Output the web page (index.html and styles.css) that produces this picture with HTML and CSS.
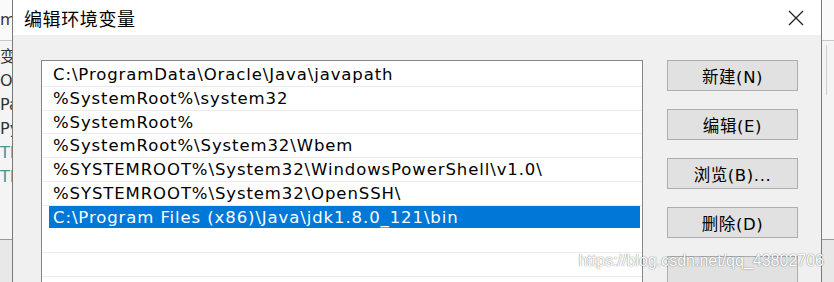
FILE: index.html
```html
<!DOCTYPE html>
<html lang="zh-CN">
<head>
  <meta charset="UTF-8" />
  <title>编辑环境变量</title>
  <link rel="stylesheet" href="styles.css">
</head>
<body>

  <div class="screen">
    <div class="behind left">
      <div class="behind-top"><span>m</span></div>
      <div class="behind-mid">
        <span>变</span>
        <span>O</span>
        <span>Pa</span>
        <span>Py</span>
        <span class="teal">TE</span>
        <span class="teal">TN</span>
      </div>
      <div class="behind-bottom"></div>
    </div>

    <div class="dialog">
      <div class="titlebar">
        <span class="title">编辑环境变量</span>
        <svg class="close" width="16" height="16" viewBox="0 0 16 16">
          <path d="M1 1 L15 15 M15 1 L1 15" stroke="#222" stroke-width="1.3" fill="none" />
        </svg>
      </div>

      <div class="body">
        <ul class="pathlist">
          <li><span>C:\ProgramData\Oracle\Java\javapath</span></li>
          <li><span>%SystemRoot%\system32</span></li>
          <li><span>%SystemRoot%</span></li>
          <li><span>%SystemRoot%\System32\Wbem</span></li>
          <li><span>%SYSTEMROOT%\System32\WindowsPowerShell\v1.0\</span></li>
          <li><span>%SYSTEMROOT%\System32\OpenSSH\</span></li>
          <li class="selected"><span>C:\Program Files (x86)\Java\jdk1.8.0_121\bin</span></li>
          <li><span></span></li>
          <li><span></span></li>
        </ul>

        <div class="buttons">
          <button>新建(N)</button>
          <button>编辑(E)</button>
          <button>浏览(B)...</button>
          <button>删除(D)</button>
          <button>&nbsp;</button>
        </div>
      </div>
    </div>

    <div class="behind right">
      <div class="behind-top"></div>
      <div class="behind-mid"><div class="scroll"></div></div>
      <div class="behind-bottom"></div>
    </div>

    <div class="watermark">https://blog.csdn.net/qq_43802706</div>
  </div>

</body>
</html>
```

FILE: styles.css
```css
body {
  margin: 0;
  background: #f0f0f0;
  font-family: "DejaVu Sans", "Noto Sans CJK SC", sans-serif;
  overflow: hidden;
}

.screen {
  position: relative;
  display: flex;
  width: 834px;
  height: 282px;
  overflow: hidden;
}

/* window behind the dialog */
.behind {
  width: 12px;
  display: flex;
  flex-direction: column;
  overflow: hidden;
  flex-shrink: 0;
}

.behind-top {
  height: 41px;
  flex-shrink: 0;
  background: #fafafa;
  border-bottom: 1px solid #c8c8c8;
  box-sizing: border-box;
  font-size: 16px;
  line-height: 40px;
  color: #333;
}

.behind-mid {
  height: 198px;
  flex-shrink: 0;
  background: #f4f4f4;
  display: flex;
  flex-direction: column;
  padding-top: 4px;
  font-size: 16px;
  color: #333;
  box-sizing: border-box;
}

.behind-mid span {
  height: 24px;
  line-height: 24px;
  white-space: nowrap;
}

.behind-mid .teal {
  color: #3a9c94;
}

.behind-bottom {
  flex: 1;
  background: #e8e8e8;
  border-top: 1px solid #9a9a9a;
}

.right .behind-mid {
  padding: 4px 0 0 4px;
}

.scroll {
  width: 1px;
  height: 50px;
  background: #cfcfcf;
}

/* dialog */
.dialog {
  width: 810px;
  flex-shrink: 0;
  border-left: 1px solid #7a7a7a;
  border-right: 1px solid #7a7a7a;
  box-sizing: border-box;
  display: flex;
  flex-direction: column;
  background: #f0f0f0;
}

.titlebar {
  height: 35px;
  flex-shrink: 0;
  background: #fff;
  display: flex;
  align-items: center;
  justify-content: space-between;
  padding: 0 17px 0 11px;
}

.title {
  font-family: "Noto Sans CJK SC", sans-serif;
  font-size: 18px;
  letter-spacing: 0.6px;
  color: #000;
}

.close {
  display: block;
}

.body {
  display: flex;
  flex-shrink: 0;
  padding: 25px 0 0 28px;
  gap: 24px;
}

.pathlist {
  list-style: none;
  margin: 0;
  padding: 2px 0 0 0;
  width: 602px;
  height: 240px;
  flex-shrink: 0;
  background: #fff;
  border: 1px solid #828790;
  box-sizing: border-box;
}

.pathlist li {
  height: 23.75px;
  border-bottom: 1px solid #ececec;
  box-sizing: border-box;
  display: flex;
}

.pathlist li span {
  flex: 1;
  margin: 0 2px 0 7px;
  padding-left: 4px;
  font-size: 16.5px;
  letter-spacing: 0.9px;
  line-height: 23px;
  color: #000;
  white-space: nowrap;
}

.pathlist li.selected {
  border-bottom-color: #fff;
}

.pathlist li.selected span {
  background: #0078d7;
  color: #fff;
}

.buttons {
  display: flex;
  flex-direction: column;
  gap: 18px;
}

button {
  width: 131px;
  height: 31px;
  background: #e1e1e1;
  border: 1px solid #adadad;
  font-family: "DejaVu Sans", "Noto Sans CJK SC", sans-serif;
  font-size: 16.5px;
  letter-spacing: 0.6px;
  color: #000;
  padding: 0;
  flex-shrink: 0;
}

.watermark {
  position: absolute;
  right: 10px;
  top: 252px;
  font-family: "Liberation Sans", sans-serif;
  font-size: 16px;
  color: #fff;
  text-shadow: 0 0 1px rgba(0, 0, 0, 0.5), 0 0 2px rgba(0, 0, 0, 0.2);
}
```
